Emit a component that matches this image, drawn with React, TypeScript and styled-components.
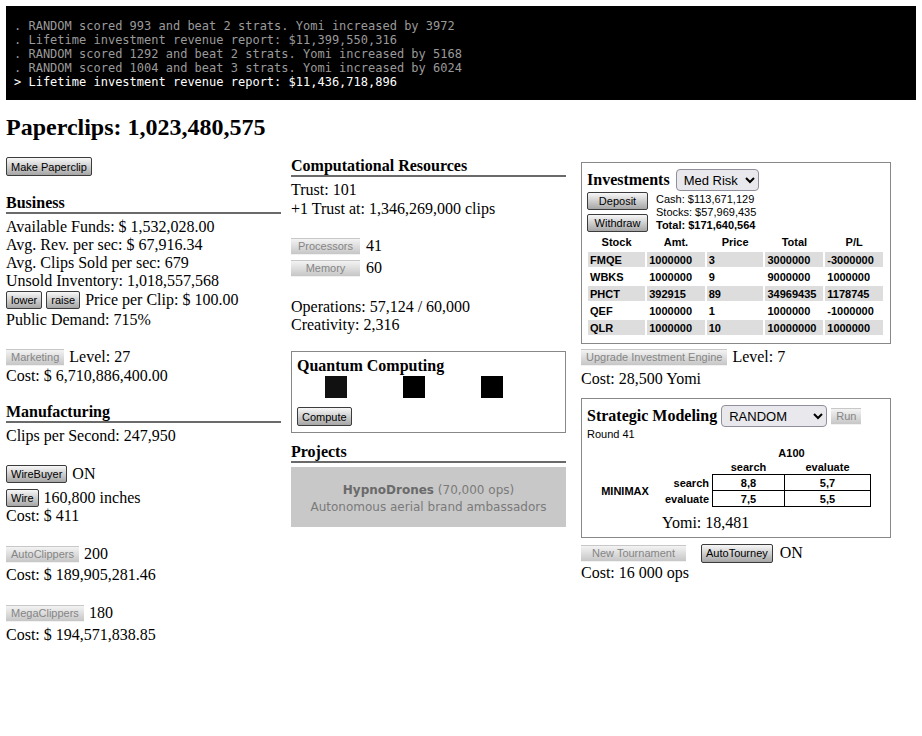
import React from 'react'
import styled, { createGlobalStyle } from 'styled-components'

const GlobalStyle = createGlobalStyle`
  body {
    margin: 0;
    background: #fff;
    font-family: "Liberation Serif", "Times New Roman", serif;
    color: #000;
  }
`

const sans = `"Liberation Sans", Arial, sans-serif`

const Page = styled.div`
  padding: 6px;
`

const Console = styled.div`
  width: 910px;
  height: 94px;
  box-sizing: border-box;
  padding: 13px 8px 0;
  background: #000;
  font-family: "DejaVu Sans Mono", "Liberation Mono", monospace;
  font-size: 12px;
  line-height: 14px;
`

const ConsoleLine = styled.div<{ $current?: boolean }>`
  white-space: pre;
  color: ${(p) => (p.$current ? '#fff' : '#9a9a9a')};
`

const Title = styled.h2`
  margin: 14px 0 16px;
  font-size: 24px;
  line-height: 27px;
  font-weight: bold;
`

const Columns = styled.div`
  display: flex;
  align-items: flex-start;
`

const Column = styled.div<{ $w: number; $ml?: number }>`
  width: ${(p) => p.$w}px;
  margin-left: ${(p) => p.$ml ?? 0}px;
  display: flex;
  flex-direction: column;
`

const Heading = styled.div<{ $mt?: number }>`
  margin-top: ${(p) => p.$mt ?? 0}px;
  font-size: 16px;
  font-weight: bold;
  line-height: 16px;
  padding-bottom: 1px;
  border-bottom: 2px solid #6a6a6a;
`

const Line = styled.div<{ $mt?: number }>`
  margin-top: ${(p) => p.$mt ?? 0}px;
  font-size: 16px;
  line-height: 18px;
  white-space: nowrap;
`

const Row = styled.div<{ $mt?: number; $h?: number; $gap?: number }>`
  margin-top: ${(p) => p.$mt ?? 0}px;
  height: ${(p) => p.$h ?? 20}px;
  display: flex;
  align-items: center;
  gap: ${(p) => p.$gap ?? 5}px;
  font-size: 16px;
  white-space: nowrap;
`

const Btn = styled.button<{ $w?: number; $h?: number }>`
  box-sizing: border-box;
  width: ${(p) => (p.$w ? `${p.$w}px` : 'auto')};
  height: ${(p) => p.$h ?? 18}px;
  padding: 0 4px;
  margin: 0;
  font-family: ${sans};
  font-size: 11px;
  color: #000;
  border: 1px solid #3c3c3c;
  border-radius: 2px;
  background: linear-gradient(#f7f7f7, #a6a6a6);
  white-space: nowrap;
  &:disabled {
    color: #858585;
    border-color: transparent;
    border-radius: 0;
    background: linear-gradient(#f3f3f3, #c6c6c6);
  }
`

const Pair = styled.div`
  display: flex;
  gap: 4px;
`

const Box = styled.div<{ $mt?: number; $pb?: number }>`
  margin-top: ${(p) => p.$mt ?? 0}px;
  border: 1px solid #888;
  padding: 5px 5px ${(p) => p.$pb ?? 5}px;
`

const BoxTitle = styled.div`
  font-size: 16px;
  font-weight: bold;
  line-height: 18px;
  white-space: nowrap;
`

const Chips = styled.div`
  margin-top: 1px;
  display: flex;
  gap: 56px;
  padding-left: 28px;
`

const Chip = styled.div<{ $shade: string }>`
  width: 22px;
  height: 22px;
  background: ${(p) => p.$shade};
`

const ComputeRow = styled.div`
  margin-top: 9px;
  display: flex;
`

const ProjectCard = styled.div`
  margin-top: 4px;
  height: 60px;
  box-sizing: border-box;
  padding-top: 4px;
  background: #c8c8c8;
  display: flex;
  flex-direction: column;
  justify-content: center;
  align-items: center;
  font-family: "DejaVu Sans", Verdana, sans-serif;
  font-size: 12px;
  line-height: 17px;
  color: #7a7a7a;
`

const ProjectName = styled.span`
  font-weight: bold;
  color: #6a6a6a;
`

const Select = styled.select<{ $w: number }>`
  width: ${(p) => p.$w}px;
  height: 22px;
  font-family: ${sans};
  font-size: 13px;
  color: #000;
  background-color: #e9e9ed;
  border: 1px solid #8f8f9d;
  border-radius: 4px;
  padding: 0 3px;
  margin: 0;
`

const BankRow = styled.div`
  display: flex;
  gap: 8px;
`

const BankButtons = styled.div`
  display: flex;
  flex-direction: column;
  gap: 4px;
`

const BankInfo = styled.div`
  font-family: ${sans};
  font-size: 11px;
  line-height: 13px;
  padding-top: 1px;
`

const StockTable = styled.table`
  margin-left: -1px;
  border-spacing: 2px;
  font-family: ${sans};
  font-size: 11px;
  font-weight: bold;
  th {
    width: 58px;
    height: 16px;
    padding: 0;
    text-align: center;
  }
  td {
    height: 15px;
    padding: 0 2px;
    text-align: left;
  }
  tr:nth-child(odd) td {
    background: #dddddd;
  }
`

const Small = styled.div<{ $mt?: number }>`
  margin-top: ${(p) => p.$mt ?? 0}px;
  font-family: ${sans};
  font-size: 11px;
  line-height: 13px;
`

const PayoffTable = styled.table`
  margin-top: 4px;
  border-collapse: collapse;
  font-family: ${sans};
  font-size: 11px;
  font-weight: bold;
  th,
  td {
    padding: 0;
  }
  tr.top th {
    height: 15px;
  }
  tr.head th {
    height: 14px;
  }
  .corner {
    width: 76px;
  }
  .rowlabel {
    width: 46px;
    text-align: right;
    padding-right: 3px;
  }
  .col {
    text-align: center;
  }
  td.cell {
    border: 1px solid #000;
    text-align: center;
    height: 15px;
  }
`

const Yomi = styled.div`
  margin-top: 7px;
  padding-left: 75px;
  font-size: 16px;
  line-height: 18px;
`

const stocks = [
  ['FMQE', '1000000', '3', '3000000', '-3000000'],
  ['WBKS', '1000000', '9', '9000000', '1000000'],
  ['PHCT', '392915', '89', '34969435', '1178745'],
  ['QEF', '1000000', '1', '1000000', '-1000000'],
  ['QLR', '1000000', '10', '10000000', '1000000'],
]

const log = [
  '. RANDOM scored 993 and beat 2 strats. Yomi increased by 3972',
  '. Lifetime investment revenue report: $11,399,550,316',
  '. RANDOM scored 1292 and beat 2 strats. Yomi increased by 5168',
  '. RANDOM scored 1004 and beat 3 strats. Yomi increased by 6024',
]

export default function App() {
  return (
    <Page>
      <GlobalStyle />
      <Console>
        {log.map((l, i) => (
          <ConsoleLine key={i}>{l}</ConsoleLine>
        ))}
        <ConsoleLine $current>{'> Lifetime investment revenue report: $11,436,718,896'}</ConsoleLine>
      </Console>

      <Title>Paperclips: 1,023,480,575</Title>

      <Columns>
        <Column $w={275}>
          <Row $h={19}>
            <Btn $h={19} $w={86}>Make Paperclip</Btn>
          </Row>
          <Heading $mt={19}>Business</Heading>
          <Line $mt={4}>Available Funds: $ 1,532,028.00</Line>
          <Line>Avg. Rev. per sec: $ 67,916.34</Line>
          <Line>Avg. Clips Sold per sec: 679</Line>
          <Line>Unsold Inventory: 1,018,557,568</Line>
          <Row>
            <Pair>
              <Btn>lower</Btn>
              <Btn>raise</Btn>
            </Pair>
            Price per Clip: $ 100.00
          </Row>
          <Line $mt={1}>Public Demand: 715%</Line>
          <Row $mt={18}>
            <Btn disabled $h={17}>Marketing</Btn>
            Level: 27
          </Row>
          <Line>Cost: $ 6,710,886,400.00</Line>

          <Heading $mt={19}>Manufacturing</Heading>
          <Line $mt={4}>Clips per Second: 247,950</Line>
          <Row $mt={19}>
            <Btn>WireBuyer</Btn>
            ON
          </Row>
          <Row $mt={4}>
            <Btn>Wire</Btn>
            160,800 inches
          </Row>
          <Line $mt={-1}>Cost: $ 411</Line>
          <Row $mt={19}>
            <Btn disabled $h={17}>AutoClippers</Btn>
            200
          </Row>
          <Line $mt={2}>Cost: $ 189,905,281.46</Line>
          <Row $mt={19}>
            <Btn disabled $h={17}>MegaClippers</Btn>
            180
          </Row>
          <Line $mt={3}>Cost: $ 194,571,838.85</Line>
        </Column>

        <Column $w={275} $ml={10}>
          <Heading $mt={1}>Computational Resources</Heading>
          <Line $mt={4}>Trust: 101</Line>
          <Line $mt={1}>+1 Trust at: 1,346,269,000 clips</Line>
          <Row $mt={17} $h={22} $gap={6}>
            <Btn disabled $h={17} $w={69}>Processors</Btn>
            41
          </Row>
          <Row $h={22} $gap={6}>
            <Btn disabled $h={17} $w={69}>Memory</Btn>
            60
          </Row>
          <Line $mt={19}>Operations: 57,124 / 60,000</Line>
          <Line>Creativity: 2,316</Line>

          <Box $mt={17} $pb={6}>
            <BoxTitle>Quantum Computing</BoxTitle>
            <Chips>
              <Chip $shade="#111" />
              <Chip $shade="#000" />
              <Chip $shade="#000" />
            </Chips>
            <ComputeRow>
              <Btn $h={19}>Compute</Btn>
            </ComputeRow>
          </Box>

          <Heading $mt={11}>Projects</Heading>
          <ProjectCard>
            <div>
              <ProjectName>HypnoDrones</ProjectName> (70,000 ops)
            </div>
            <div>Autonomous aerial brand ambassadors</div>
          </ProjectCard>
        </Column>

        <Column $w={310} $ml={15}>
          <Box $mt={5} $pb={6}>
            <Row $h={24} $gap={6}>
              <BoxTitle>Investments</BoxTitle>
              <Select $w={83} defaultValue="med">
                <option value="low">Low Risk</option>
                <option value="med">Med Risk</option>
                <option value="high">High Risk</option>
              </Select>
            </Row>
            <BankRow>
              <BankButtons>
                <Btn $w={61}>Deposit</Btn>
                <Btn $w={61}>Withdraw</Btn>
              </BankButtons>
              <BankInfo>
                <div>Cash: $113,671,129</div>
                <div>Stocks: $57,969,435</div>
                <div>
                  <b>Total: $171,640,564</b>
                </div>
              </BankInfo>
            </BankRow>
            <StockTable>
              <thead>
                <tr>
                  <th>Stock</th>
                  <th>Amt.</th>
                  <th>Price</th>
                  <th>Total</th>
                  <th>P/L</th>
                </tr>
              </thead>
              <tbody>
                {stocks.map((s) => (
                  <tr key={s[0]}>
                    {s.map((c, i) => (
                      <td key={i}>{c}</td>
                    ))}
                  </tr>
                ))}
              </tbody>
            </StockTable>
          </Box>
          <Row $mt={3}>
            <Btn disabled $h={17}>Upgrade Investment Engine</Btn>
            Level: 7
          </Row>
          <Line $mt={3}>Cost: 28,500 Yomi</Line>

          <Box $mt={10}>
            <Row $h={24} $gap={4}>
              <BoxTitle>Strategic Modeling</BoxTitle>
              <Select $w={106} defaultValue="random">
                <option value="random">RANDOM</option>
                <option value="a100">A100</option>
                <option value="minimax">MINIMAX</option>
              </Select>
              <Btn disabled $h={17}>Run</Btn>
            </Row>
            <Small>Round 41</Small>
            <PayoffTable>
              <tbody>
                <tr className="top">
                  <th className="corner" />
                  <th className="rowlabel" />
                  <th className="col" colSpan={2}>
                    A100
                  </th>
                </tr>
                <tr className="head">
                  <th className="corner" />
                  <th className="rowlabel" />
                  <th className="col" style={{ width: 72 }}>
                    search
                  </th>
                  <th className="col" style={{ width: 86 }}>
                    evaluate
                  </th>
                </tr>
                <tr>
                  <th className="corner" rowSpan={2}>
                    MINIMAX
                  </th>
                  <th className="rowlabel">search</th>
                  <td className="cell">8,8</td>
                  <td className="cell">5,7</td>
                </tr>
                <tr>
                  <th className="rowlabel">evaluate</th>
                  <td className="cell">7,5</td>
                  <td className="cell">5,5</td>
                </tr>
              </tbody>
            </PayoffTable>
            <Yomi>Yomi: 18,481</Yomi>
          </Box>
          <Row $mt={5} $gap={15}>
            <Btn disabled $h={17} $w={105}>New Tournament</Btn>
            <Row $gap={7}>
              <Btn $h={19}>AutoTourney</Btn>
              ON
            </Row>
          </Row>
          <Line $mt={1}>Cost: 16 000 ops</Line>
        </Column>
      </Columns>
    </Page>
  )
}
